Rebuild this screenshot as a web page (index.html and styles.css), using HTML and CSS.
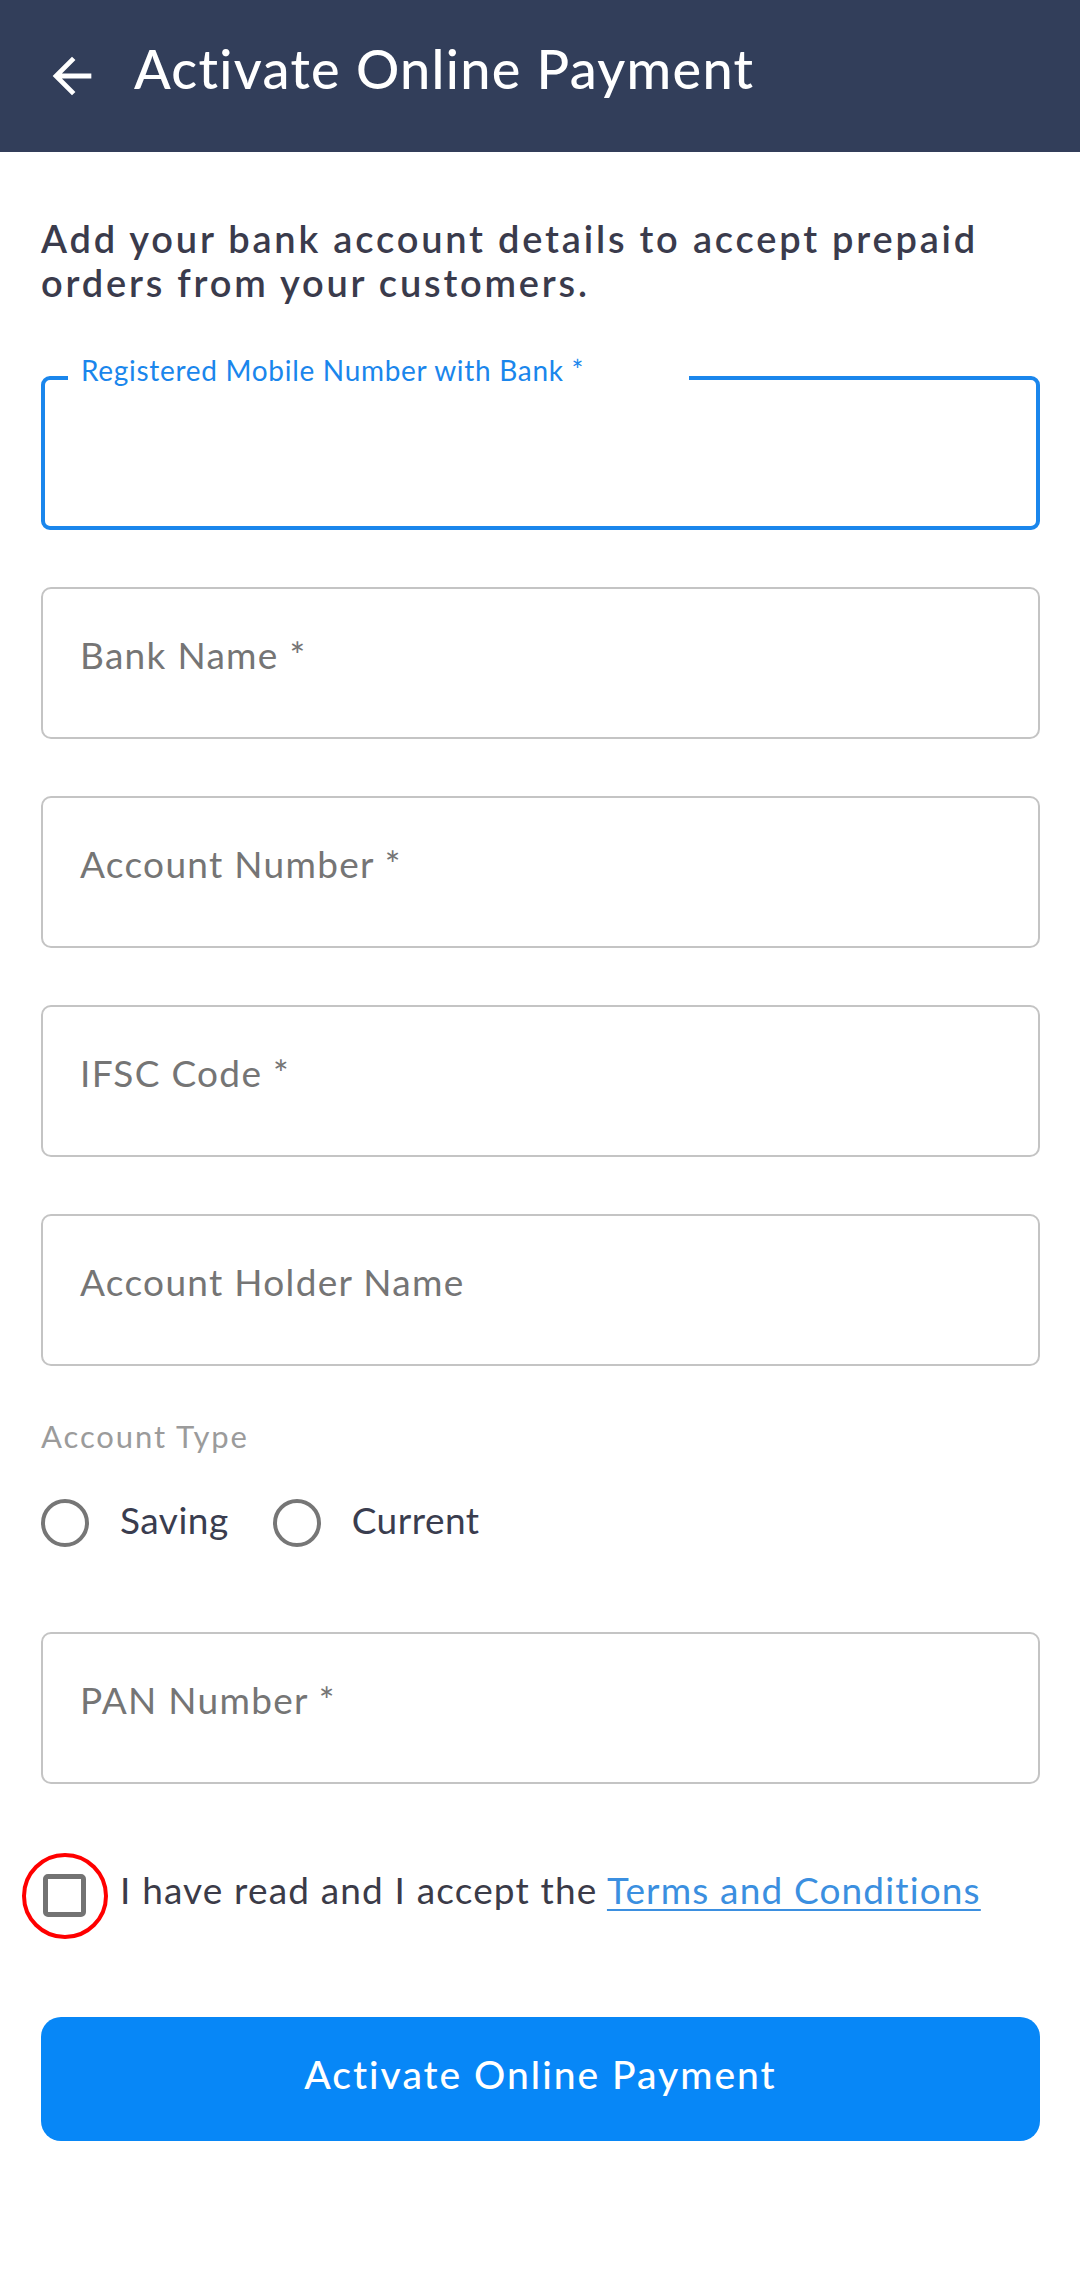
FILE: index.html
```html
<!DOCTYPE html>
<html lang="en">
<head>
<meta charset="utf-8">
<title>Activate Online Payment</title>
<link rel="stylesheet" href="styles.css">
</head>
<body>
<header class="topbar">
  <svg class="back" viewBox="0 0 24 24" width="58" height="58" aria-hidden="true"><path fill="#ffffff" d="M20 11H7.83l5.59-5.59L12 4l-8 8 8 8 1.41-1.41L7.83 13H20v-2z"/></svg>
  <h1 class="title">Activate Online Payment</h1>
</header>
<main class="content">
  <p class="intro">Add your bank account details to accept prepaid orders from your customers.</p>

  <div class="field field-focused">
    <span class="float-label">Registered Mobile Number with Bank *</span>
  </div>
  <div class="field"><span class="placeholder">Bank Name *</span></div>
  <div class="field"><span class="placeholder">Account Number *</span></div>
  <div class="field"><span class="placeholder">IFSC Code *</span></div>
  <div class="field"><span class="placeholder">Account Holder Name</span></div>

  <div class="group-label">Account Type</div>
  <div class="radios">
    <label class="radio"><span class="radio-ring"></span><span class="radio-text">Saving</span></label>
    <label class="radio"><span class="radio-ring"></span><span class="radio-text">Current</span></label>
  </div>

  <div class="field field-pan"><span class="placeholder">PAN Number *</span></div>

  <div class="terms">
    <span class="check-wrap"><span class="checkbox"></span><span class="highlight"></span></span>
    <span class="terms-text">I have read and I accept the <a class="link" href="#">Terms and Conditions</a></span>
  </div>

  <button class="primary" type="button"><span>Activate Online Payment</span></button>
</main>
</body>
</html>
```

FILE: styles.css
```css
* { box-sizing: border-box; }
html, body { margin: 0; padding: 0; background: #ffffff; }
body {
  width: 1080px;
  min-height: 2272px;
  font-family: Lato, "Open Sans", "Liberation Sans", sans-serif;
  color: #3a3b4c;
}

.topbar {
  height: 152px;
  background: #323e5a;
  display: flex;
  align-items: center;
}
.back { margin-left: 43px; flex: none; }
.title {
  margin: 0 0 16px 33px;
  font-size: 54px;
  font-weight: 500;
  letter-spacing: 1.3px;
  color: #ffffff;
  line-height: normal;
}

.content { padding: 0 40px 0 41px; }

.intro {
  margin: 64px 0 0 0;
  font-size: 38px;
  line-height: 44px;
  font-weight: 600;
  letter-spacing: 2.8px;
  color: #3a3b4c;
}

.field {
  position: relative;
  height: 152px;
  border: 2px solid #c4c4c4;
  border-radius: 10px;
  margin-top: 57px;
  padding: 43px 0 0 37px;
}
.field-focused {
  margin-top: 72px;
  height: 154px;
  border: 4px solid #1a86ec;
  border-radius: 9px;
}
.float-label {
  position: absolute;
  left: 23px;
  top: -27px;
  width: 621px;
  padding-left: 13px;
  background: #ffffff;
  font-size: 28px;
  line-height: 34px;
  letter-spacing: 0.7px;
  color: #1a86ec;
}
.placeholder {
  font-size: 37px;
  line-height: normal;
  letter-spacing: 1.3px;
  color: #757575;
}

.group-label {
  margin-top: 52px;
  font-size: 31px;
  line-height: 36px;
  letter-spacing: 1.9px;
  color: #9b9b9b;
}

.radios {
  margin-top: 45px;
  display: flex;
  align-items: center;
  height: 48px;
}
.radio {
  display: flex;
  align-items: center;
  margin-right: 44px;
}
.radio-ring {
  width: 48px;
  height: 48px;
  border: 4px solid #767676;
  border-radius: 50%;
  flex: none;
}
.radio-text {
  margin-left: 31px;
  margin-bottom: 8px;
  font-size: 37px;
  line-height: normal;
  letter-spacing: 0.5px;
  color: #3a3d4f;
}

.field-pan { margin-top: 85px; }

.terms {
  margin-top: 68px;
  height: 86px;
  display: flex;
  align-items: center;
}
.check-wrap {
  position: relative;
  margin-left: 2px;
  width: 43px;
  height: 43px;
  flex: none;
}
.checkbox {
  display: block;
  width: 43px;
  height: 43px;
  border: 5px solid #737373;
  border-radius: 5px;
}
.highlight {
  position: absolute;
  left: -21px;
  top: -21px;
  width: 86px;
  height: 86px;
  border: 4px solid #ff0000;
  border-radius: 50%;
}
.terms-text {
  margin-left: 34px;
  margin-bottom: 12px;
  font-size: 37px;
  line-height: normal;
  letter-spacing: 1.15px;
  color: #3b3b48;
  white-space: nowrap;
}
.link {
  color: #3b8fe0;
  text-decoration: underline;
  text-decoration-thickness: 2px;
  text-underline-offset: 5px;
}

.primary {
  margin-top: 79px;
  width: 100%;
  height: 124px;
  border: none;
  border-radius: 20px;
  background: #0787f7;
  color: #ffffff;
  font-family: Lato, "Open Sans", "Liberation Sans", sans-serif;
  font-size: 39px;
  font-weight: 500;
  letter-spacing: 2px;
  display: flex;
  align-items: center;
  justify-content: center;
  padding: 0 0 10px 0;
}
```
